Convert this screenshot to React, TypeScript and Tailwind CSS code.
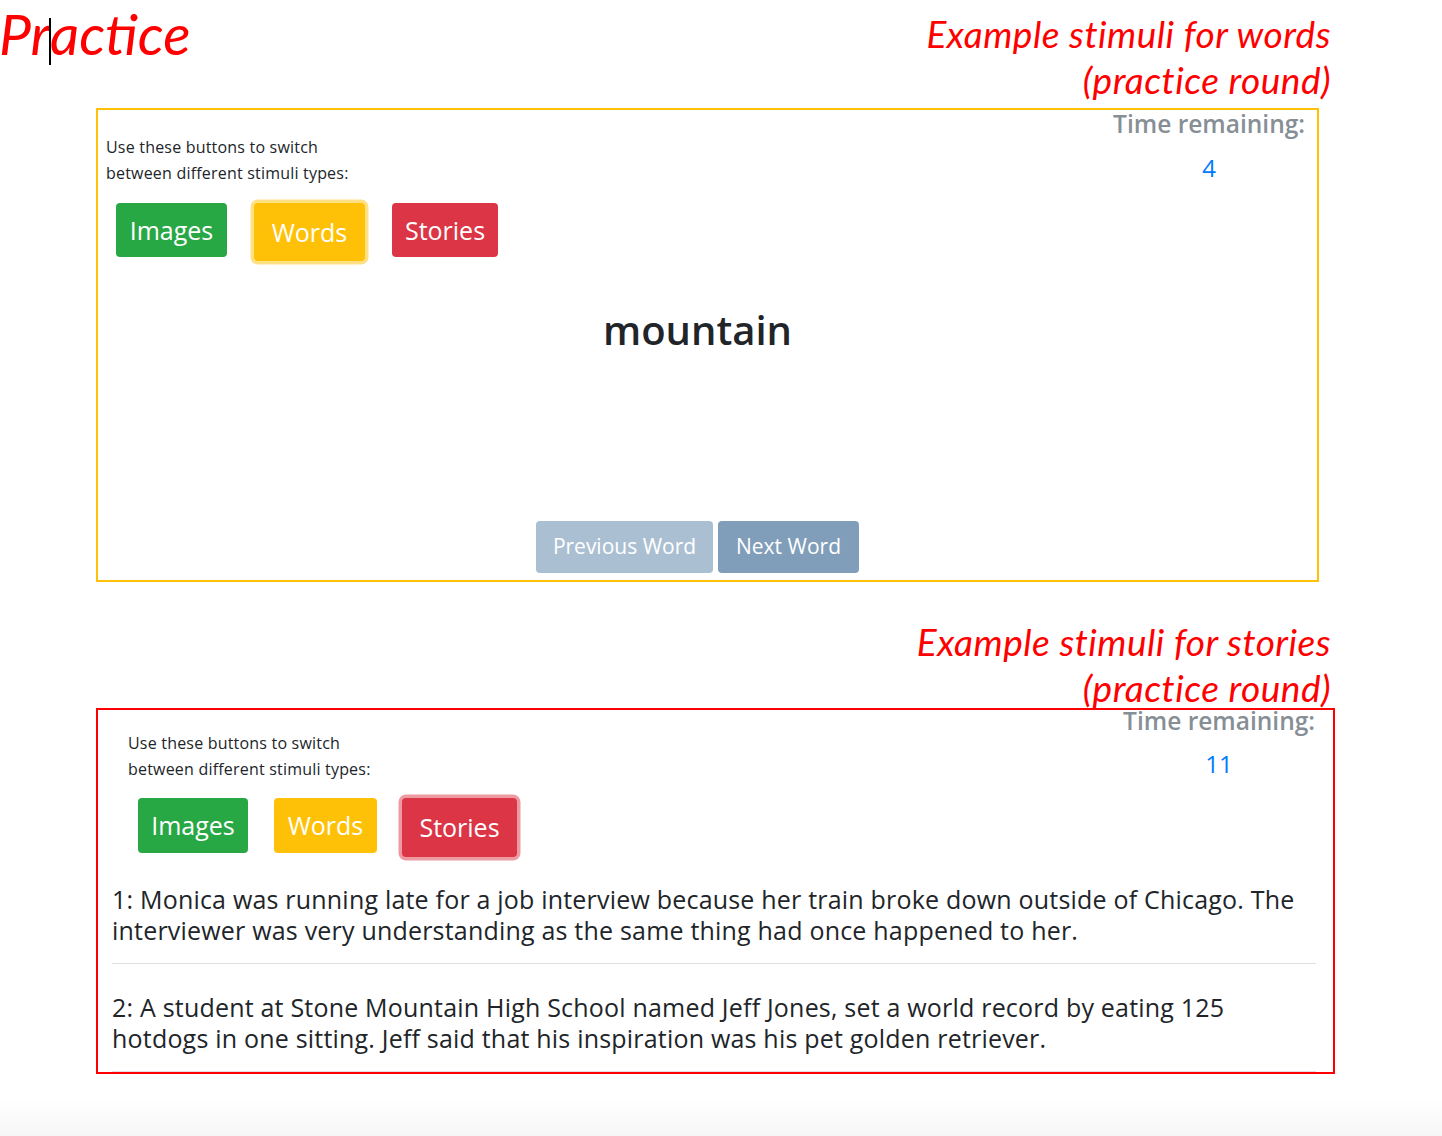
import React from 'react';

type Kind = 'images' | 'words' | 'stories';

const SANS = "font-['Open_Sans',sans-serif]";
const CAPTION = "font-['Lato',sans-serif] italic text-[37px] tracking-[0.5px] leading-[46px] text-[#ff0000] text-right";

const StimulusButton: React.FC<{ kind: Kind; active: boolean; wide: string }> = ({ kind, active, wide }) => {
  const colors: Record<Kind, string> = {
    images: 'bg-[#28a745]',
    words: 'bg-[#ffc107]',
    stories: 'bg-[#dc3545]',
  };
  const rings: Record<Kind, string> = {
    images: 'shadow-[0_0_0_3.5px_rgba(40,167,69,0.5)]',
    words: 'shadow-[0_0_0_3.5px_rgba(255,193,7,0.5)]',
    stories: 'shadow-[0_0_0_3.5px_rgba(220,53,69,0.5)]',
  };
  const label = kind === 'images' ? 'Images' : kind === 'words' ? 'Words' : 'Stories';
  return (
    <button
      className={`${colors[kind]} ${wide} ${active ? rings[kind] : ''} rounded-[4px] text-white text-[25px] leading-none flex items-center justify-center`}
    >
      {label}
    </button>
  );
};

const Instructions: React.FC = () => (
  <p className="text-[16px] tracking-[0.2px] leading-[26px] text-[#212529]">
    Use these buttons to switch
    <br />
    between different stimuli types:
  </p>
);

const Timer: React.FC<{ value: number; topClass: string; gapClass: string }> = ({ value, topClass, gapClass }) => (
  <div className={`flex flex-col items-center ${topClass}`}>
    <h4 className="text-[24.5px] leading-[29px] font-semibold text-[#868e96]">Time remaining:</h4>
    <div className={`text-[24px] leading-[32px] text-[#007bff] ${gapClass}`}>{value}</div>
  </div>
);

const App: React.FC = () => {
  return (
    <div className={`min-h-[1136px] bg-white flex flex-col ${SANS}`}>
      {/* header */}
      <div className="h-[108px] flex justify-between">
        <h1 className="font-['Lato',sans-serif] italic text-[57px] leading-[64px] text-[#ff0000] mt-[1px] -ml-[1px] whitespace-nowrap">
          Pr
          <span className="inline-block w-[2px] h-[47px] bg-black align-[-10px] -mx-[1px]" />
          actice
        </h1>
        <div className={`${CAPTION} pt-[11px] pr-[111px]`}>
          Example stimuli for words
          <br />
          (practice round)
        </div>
      </div>

      {/* words panel */}
      <div className="ml-[96px] w-[1223px] h-[474px] border-2 border-[#ffc107] flex flex-col">
        <div className="flex justify-between">
          <div className="pl-[8px] pt-[24px]">
            <Instructions />
            <div className="flex items-start gap-[27px] ml-[10px] mt-[17px]">
              <StimulusButton kind="images" active={false} wide="w-[111px] h-[54px]" />
              <StimulusButton kind="words" active wide="w-[111px] h-[58px]" />
              <StimulusButton kind="stories" active={false} wide="w-[106px] h-[54px]" />
            </div>
          </div>
          <div className="pr-[12px]">
            <Timer value={4} topClass="-mt-[1px]" gapClass="mt-[14px]" />
          </div>
        </div>
        <div className="pr-[20px] text-center mt-[45px]">
          <div className="text-[40px] leading-[48px] font-semibold text-[#212529]">mountain</div>
        </div>
        <div className="mt-auto mb-[7px] pr-[20px] flex justify-center gap-[5px]">
          <button className="w-[177px] h-[52px] rounded-[4px] bg-[#abbfd2] text-white text-[21px]">Previous Word</button>
          <button className="w-[141px] h-[52px] rounded-[4px] bg-[#809eba] text-white text-[21px]">Next Word</button>
        </div>
      </div>

      <div className={`${CAPTION} mt-[37px] -mb-[3px] pr-[111px] relative`}>
        Example stimuli for stories
        <br />
        (practice round)
      </div>

      {/* stories panel */}
      <div className="ml-[96px] w-[1239px] border-2 border-[#ff0000] flex flex-col relative">
        <div className="flex justify-between">
          <div className="pl-[30px] pt-[20px]">
            <Instructions />
            <div className="flex items-start ml-[10px] mt-[16px]">
              <StimulusButton kind="images" active={false} wide="w-[110px] h-[55px]" />
              <div className="w-[26px]" />
              <StimulusButton kind="words" active={false} wide="w-[103px] h-[55px]" />
              <div className="w-[25px]" />
              <StimulusButton kind="stories" active wide="w-[115px] h-[59px]" />
            </div>
          </div>
          <div className="pr-[18px]">
            <Timer value={11} topClass="-mt-[4px]" gapClass="mt-[13px]" />
          </div>
        </div>
        <div className="pl-[14px] pr-[17px] mt-[27px] text-[25px] tracking-[0.2px] leading-[31px] font-medium text-[#212529] whitespace-nowrap">
          <p>
            1: Monica was running late for a job interview because her train broke down outside of Chicago. The
            <br />
            interviewer was very understanding as the same thing had once happened to her.
          </p>
          <hr className="mt-[17px] border-t border-[#dee2e6]" />
          <p className="mt-[28px]">
            2: A student at Stone Mountain High School named Jeff Jones, set a world record by eating 125
            <br />
            hotdogs in one sitting. Jeff said that his inspiration was his pet golden retriever.
          </p>
          <hr className="mt-[17px] border-t border-[#dee2e6]" />
        </div>
      </div>

      <div className="flex-1 bg-[linear-gradient(to_bottom,#ffffff_40%,#f6f6f6)]" />
    </div>
  );
};

export default App;
